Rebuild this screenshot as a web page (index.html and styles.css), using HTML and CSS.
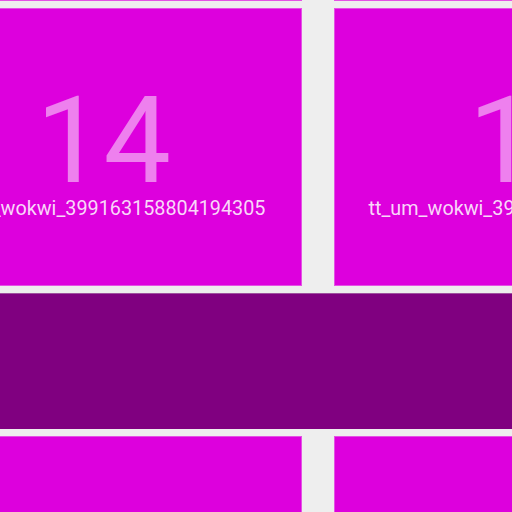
FILE: index.html
```html
<!DOCTYPE html>
<html>
<head>
<meta charset="utf-8">
<link rel="stylesheet" href="styles.css">
</head>
<body>
<div class="board">
  <div class="row">
    <div class="tile"></div>
    <div class="tile wide"></div>
  </div>
  <div class="row">
    <div class="tile">
      <div class="num">14</div>
      <div class="label">tt_um_wokwi_399163158804194305</div>
    </div>
    <div class="tile wide">
      <div class="num">15</div>
      <div class="label">tt_um_wokwi_3991631588041943051</div>
    </div>
  </div>
  <div class="band"></div>
  <div class="row">
    <div class="tile"></div>
    <div class="tile wide"></div>
  </div>
</div>
</body>
</html>
```

FILE: styles.css
```css
html, body {
  margin: 0;
  padding: 0;
  background: #eeeeee;
  overflow: hidden;
  width: 512px;
  height: 512px;
}
.board {
  display: flex;
  flex-direction: column;
  gap: 7px;
  margin-top: -277px;
  margin-left: -95px;
  width: 1200px;
}
.row {
  display: flex;
  gap: 32px;
}
.row .tile:first-child {
  width: 397px;
}
.tile {
  box-sizing: border-box;
  width: 395px;
  height: 278px;
  flex: none;
  background: #dd00dd;
  border: 1px solid #e452e4;
  display: flex;
  flex-direction: column;
  align-items: center;
  padding-top: 76px;
  font-family: Roboto, "Liberation Sans", sans-serif;
  white-space: nowrap;
}
.row .tile.wide {
  width: 404px;
}
.num {
  font-size: 120px;
  line-height: 112px;
  color: rgba(255, 255, 255, 0.5);
}
.label {
  font-size: 19.8px;
  line-height: 24px;
  color: rgba(255, 255, 255, 0.85);
}
.band {
  box-sizing: border-box;
  height: 136px;
  background: #800080;
  border-top: 1px solid #a050a0;
}
```
